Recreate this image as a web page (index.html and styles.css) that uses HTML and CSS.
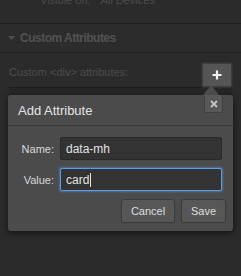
FILE: index.html
```html
<!DOCTYPE html>
<html>
<head>
<meta charset="utf-8">
<link rel="stylesheet" href="styles.css">
</head>
<body>
<div class="panel">
  <div class="visible-row">
    <span class="vis-label">Visible on:</span>
    <span class="vis-value">All Devices</span>
  </div>
  <div class="section-head">
    <svg class="caret-down" width="7" height="4" viewBox="0 0 7 4"><path d="M0 0H7L3.5 4Z" fill="#4f4f4f"/></svg>
    <span class="section-title">Custom Attributes</span>
  </div>
  <div class="section-body">
    <div class="attr-row">
      <span class="attr-label">Custom &lt;div&gt; attributes:</span>
      <button class="add-btn"><svg width="10" height="10" viewBox="0 0 10 10"><path d="M5 0.5V9.5M0.5 5H9.5" stroke="#f2f2f2" stroke-width="2.2"/></svg></button>
    </div>
    <div class="attr-list"></div>
  </div>

  <div class="popover">
    <div class="arrow"></div>
    <div class="pop-head">
      <span class="pop-title">Add Attribute</span>
      <button class="close-btn"><svg width="8" height="8" viewBox="0 0 8 8"><path d="M1 1L7 7M7 1L1 7" stroke="#c4c4c4" stroke-width="1.8"/></svg></button>
    </div>
    <div class="pop-body">
      <div class="field-grid">
        <span class="field-label">Name:</span>
        <div class="field-input">data-mh</div>
        <span class="field-label">Value:</span>
        <div class="field-input focused">card<span class="text-caret"></span></div>
      </div>
      <div class="actions">
        <button class="btn btn-cancel">Cancel</button>
        <button class="btn btn-save">Save</button>
      </div>
    </div>
  </div>
</div>
</body>
</html>
```

FILE: styles.css
```css
html, body {
  margin: 0;
  padding: 0;
  background: #2b2b2b;
}
body {
  width: 241px;
  height: 276px;
  overflow: hidden;
  font-family: "Liberation Sans", Arial, Helvetica, sans-serif;
}
.panel {
  position: relative;
  width: 241px;
  height: 276px;
  background: #2b2b2b;
}
.visible-row {
  height: 23px;
  border-bottom: 1px solid #1f1f1f;
  box-sizing: content-box;
  overflow: hidden;
  font-size: 11px;
  line-height: 12px;
  color: #4b4b4b;
}
.vis-label {
  display: inline-block;
  margin-top: -6px;
  margin-left: 40px;
  vertical-align: top;
}
.vis-value {
  display: inline-block;
  margin-top: -6px;
  margin-left: 7px;
  font-style: italic;
  vertical-align: top;
}
.section-head {
  height: 28px;
  display: flex;
  align-items: center;
  border-bottom: 1px solid #1f1f1f;
  background: #2c2c2c;
}
.caret-down {
  margin-left: 8px;
  margin-right: 5px;
}
.section-title {
  font-size: 12px;
  font-weight: bold;
  letter-spacing: -0.5px;
  color: #525252;
}
.section-body {
  padding: 10px 9px 0 9px;
}
.attr-row {
  display: flex;
  justify-content: space-between;
  align-items: flex-start;
}
.attr-label {
  font-size: 11px;
  line-height: 13px;
  margin-top: 3px;
  color: #4b4b4b;
}
.add-btn {
  width: 30px;
  height: 24px;
  padding: 0;
  margin: 0;
  display: flex;
  align-items: center;
  justify-content: center;
  background: #555555;
  border: 1px solid #3e3e3e;
  border-radius: 2px;
  box-shadow: 0 0 0 1px #333;
}
.attr-list {
  height: 60px;
  background: #262626;
  border-top: 1px solid #1d1d1d;
}
.popover {
  position: absolute;
  left: 8px;
  top: 95px;
  width: 225px;
  height: 136px;
  background: #4b4b4b;
  border-radius: 3px;
  box-shadow: 0 2px 6px rgba(0, 0, 0, 0.55);
  box-sizing: border-box;
}
.arrow {
  position: absolute;
  top: -10px;
  left: 195px;
  width: 0;
  height: 0;
  border-left: 8px solid transparent;
  border-right: 8px solid transparent;
  border-bottom: 10px solid #4b4b4b;
}
.pop-head {
  position: relative;
  height: 30px;
  display: flex;
  align-items: center;
  border-bottom: 1px solid #3a3a3a;
}
.pop-title {
  margin-left: 10px;
  font-size: 13px;
  color: #e4e4e4;
}
.close-btn {
  position: absolute;
  top: 0;
  right: 10px;
  width: 19px;
  height: 18px;
  padding: 0;
  display: flex;
  align-items: center;
  justify-content: center;
  background: #585858;
  border: 1px solid #404040;
  border-top: none;
  border-radius: 0 0 2px 2px;
}
.pop-body {
  padding: 11px 7px 8px 0;
}
.field-grid {
  display: grid;
  grid-template-columns: 46px 1fr;
  column-gap: 6px;
  row-gap: 8px;
  align-items: center;
  margin-right: 4px;
}
.field-label {
  text-align: right;
  font-size: 11px;
  color: #d8d8d8;
}
.field-input {
  height: 23px;
  box-sizing: border-box;
  padding-left: 5px;
  display: flex;
  align-items: center;
  font-size: 12px;
  color: #e2e2e2;
  background: #333333;
  border: 1px solid #292929;
  border-radius: 2px;
}
.field-input.focused {
  border-color: #5b9ee6;
  box-shadow: 0 0 2px 1px rgba(91, 158, 230, 0.45);
}
.text-caret {
  display: inline-block;
  width: 1px;
  height: 14px;
  margin-left: 1px;
  background: #e2e2e2;
}
.actions {
  display: flex;
  justify-content: flex-end;
  gap: 6px;
  margin-top: 8px;
}
.btn {
  height: 24px;
  padding: 0;
  font-family: "Liberation Sans", Arial, Helvetica, sans-serif;
  font-size: 11px;
  color: #dedede;
  background: #575757;
  border: 1px solid #3b3b3b;
  border-radius: 3px;
}
.btn-cancel { width: 54px; }
.btn-save { width: 45px; }
```
